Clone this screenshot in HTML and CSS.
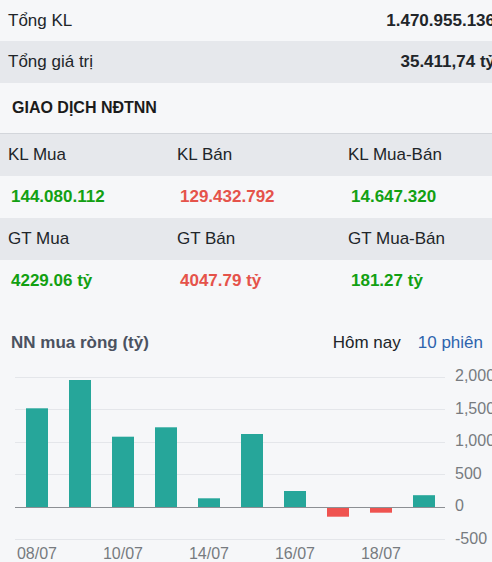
FILE: index.html
```html
<!DOCTYPE html>
<html lang="vi">
<head>
  <meta charset="UTF-8" />
  <title>Giao dịch NĐTNN</title>
  <link rel="stylesheet" href="styles.css">
</head>
<body>
  <div class="panel">
    <div class="sum-row">
      <span>Tổng KL</span>
      <b>1.470.955.136</b>
    </div>
    <div class="sum-row alt">
      <span>Tổng giá trị</span>
      <b>35.411,74 tỷ</b>
    </div>

    <h2 class="section-title">GIAO DỊCH NĐTNN</h2>

    <div class="nn-grid">
      <div class="cell head">KL Mua</div>
      <div class="cell head">KL Bán</div>
      <div class="cell head">KL Mua-Bán</div>
      <div class="cell val up">144.080.112</div>
      <div class="cell val down">129.432.792</div>
      <div class="cell val up">14.647.320</div>
      <div class="cell head">GT Mua</div>
      <div class="cell head">GT Bán</div>
      <div class="cell head">GT Mua-Bán</div>
      <div class="cell val up">4229.06 tỷ</div>
      <div class="cell val down">4047.79 tỷ</div>
      <div class="cell val up">181.27 tỷ</div>
    </div>

    <div class="chart-head">
      <span class="chart-title">NN mua ròng (tỷ)</span>
      <div class="tabs">
        <span class="tab">Hôm nay</span>
        <span class="tab active">10 phiên</span>
      </div>
    </div>

    <svg class="chart" width="500" height="200" viewBox="0 0 500 200">
      <!-- grid -->
      <g class="grid">
        <line x1="15" x2="445" y1="15.5" y2="15.5" />
        <line x1="15" x2="445" y1="47.5" y2="47.5" />
        <line x1="15" x2="445" y1="80.5" y2="80.5" />
        <line x1="15" x2="445" y1="112.5" y2="112.5" />
        <line x1="15" x2="445" y1="177.5" y2="177.5" />
      </g>
      <!-- bars: 0.065px per ty, zero at y=145 -->
      <g class="bars">
        <rect class="pos" x="26" y="46.3" width="22" height="98.7" />
        <rect class="pos" x="69" y="18" width="22" height="127" />
        <rect class="pos" x="112" y="74.7" width="22" height="70.3" />
        <rect class="pos" x="155" y="65.3" width="22" height="79.7" />
        <rect class="pos" x="198" y="136.3" width="22" height="8.7" />
        <rect class="pos" x="241" y="72" width="22" height="73" />
        <rect class="pos" x="284" y="129" width="22" height="16" />
        <rect class="neg" x="327" y="145" width="22" height="9.7" />
        <rect class="neg" x="370" y="145" width="22" height="5.7" />
        <rect class="pos" x="413" y="133.2" width="22" height="11.8" />
      </g>
      <line class="zero" x1="15" x2="445" y1="145.5" y2="145.5" />
      <g class="y-labels">
        <text x="455" y="15">2,000</text>
        <text x="455" y="47.5">1,500</text>
        <text x="455" y="80">1,000</text>
        <text x="455" y="112.5">500</text>
        <text x="455" y="145">0</text>
        <text x="455" y="177.5">-500</text>
      </g>
      <g class="x-labels">
        <text x="37" y="193">08/07</text>
        <text x="123" y="193">10/07</text>
        <text x="209" y="193">14/07</text>
        <text x="295" y="193">16/07</text>
        <text x="381" y="193">18/07</text>
      </g>
    </svg>
  </div>
</body>
</html>
```

FILE: styles.css
```css
html, body {
  margin: 0;
  padding: 0;
}

body {
  background-color: #f6f7f9;
  font-family: "Liberation Sans", Arial, sans-serif;
  color: #212529;
  overflow: hidden;
}

.panel {
  width: 500px;
}

.sum-row {
  display: flex;
  justify-content: space-between;
  align-items: center;
  height: 41px;
  padding: 0 5px 0 8px;
  font-size: 17px;
}

.sum-row.alt {
  background-color: #e6e8ec;
  height: 42px;
}

.sum-row b {
  font-weight: bold;
}

.section-title {
  margin: 0;
  height: 50px;
  display: flex;
  align-items: center;
  padding-left: 12px;
  font-size: 16px;
  font-weight: bold;
  color: #1b1b1b;
}

.nn-grid {
  display: grid;
  grid-template-columns: 169px 171px 1fr;
  grid-auto-rows: 42px;
  border-top: 1px solid #d3d6db;
}

.cell {
  display: flex;
  align-items: center;
  font-size: 17px;
}

.cell.head {
  background-color: #e6e8ec;
  padding-left: 8px;
}

.cell.val {
  padding-left: 11px;
  font-weight: bold;
}

.up {
  color: #12a012;
}

.down {
  color: #e5534b;
}

.chart-head {
  display: flex;
  justify-content: space-between;
  align-items: center;
  height: 26px;
  margin-top: 28px;
  padding: 0 17px 0 11px;
}

.chart-title {
  font-size: 17px;
  font-weight: bold;
  color: #4b5260;
}

.tabs {
  display: flex;
  gap: 17px;
  font-size: 17px;
}

.tab.active {
  color: #2d63ad;
}

.chart {
  display: block;
  margin-top: 6px;
}

.grid line {
  stroke: #e4e6ea;
  stroke-width: 1;
}

.zero {
  stroke: #8c8f94;
  stroke-width: 1;
}

.bars .pos {
  fill: #26a69a;
}

.bars .neg {
  fill: #ef5350;
}

.chart text {
  font-family: "Liberation Sans", Arial, sans-serif;
  font-size: 16px;
  fill: #777b80;
  dominant-baseline: middle;
}

.x-labels text {
  text-anchor: middle;
}
```
